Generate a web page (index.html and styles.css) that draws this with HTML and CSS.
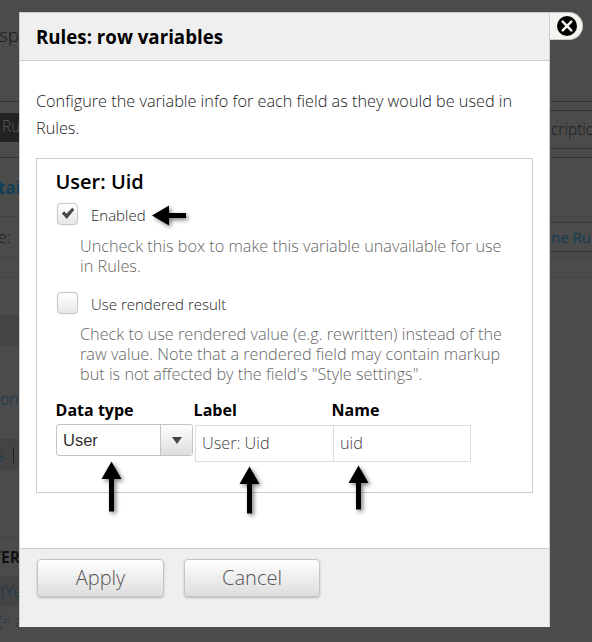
FILE: index.html
```html
<!DOCTYPE html>
<html lang="en">
<head>
<meta charset="utf-8">
<title>Rules: row variables</title>
<link rel="stylesheet" href="styles.css">
</head>
<body>
<div class="page">
  <div class="side left">
    <div class="row r1"><span class="sp">sp</span></div>
    <div class="row r2"><span class="tab">Ru</span></div>
    <div class="row r3"><b class="blue">tai</b></div>
    <div class="row r4"><span>e:</span></div>
    <div class="row r5"></div>
    <div class="row r6"></div>
    <div class="row band r7"></div>
    <div class="row r8"><span class="link">orm</span></div>
    <div class="row band r9"><span class="link">s</span><i class="bar"></i></div>
    <div class="row r10"></div>
    <div class="row r11"><b>TER</b></div>
    <div class="row band r12"><span class="link">(Yes)</span></div>
    <div class="row r13"><span class="link">(= a</span></div>
  </div>
  <div class="side right">
    <div class="row r1"></div>
    <div class="row r2"><span class="ghost">criptio</span></div>
    <div class="row r3"></div>
    <div class="row r4"><span class="ghost rules">ne Rul</span></div>
    <div class="row r5"></div>
  </div>
</div>

<div class="modal">
  <header class="head"><h1>Rules: row variables</h1></header>
  <main class="body">
    <p class="intro">Configure the variable info for each field as they would be used in<br>Rules.</p>
    <section class="fieldset">
      <h2>User: Uid</h2>
      <div class="option">
        <span class="check"><svg width="14" height="13" viewBox="0 0 14 13"><path d="M.8 6.5 3.2 4.200 5.500 6.700 11.200.8 13.400 2.800 5.800 12Z" fill="#4b4b4b"/></svg></span>
        <label>Enabled</label>
      </div>
      <p class="help first">Uncheck this box to make this variable unavailable for use<br>in Rules.</p>
      <div class="option">
        <span class="check"></span>
        <label>Use rendered result</label>
      </div>
      <p class="help second">Check to use rendered value (e.g. rewritten) instead of the<br>raw value. Note that a rendered field may contain markup<br>but is not affected by the field's "Style settings".</p>
      <div class="fields">
        <div class="field"><b>Data type</b>
          <div class="select"><span>User</span><i><svg width="10" height="7" viewBox="0 0 10 7"><path d="M0 0H10L5 7Z" fill="#444"/></svg></i></div>
        </div>
        <div class="field"><b>Label</b><div class="input">User: Uid</div></div>
        <div class="field"><b>Name</b><div class="input">uid</div></div>
      </div>
    </section>
  </main>
  <footer class="foot">
    <div class="btn apply">Apply</div>
    <div class="btn cancel">Cancel</div>
  </footer>
</div>

<div class="close"><svg width="20" height="20" viewBox="0 0 20 20"><circle cx="10" cy="10" r="10" fill="#000"/><path d="M5.7 5.7 14.3 14.3M14.3 5.7 5.7 14.3" stroke="#f3f5ee" stroke-width="2.5" stroke-linecap="round"/></svg></div>

<svg class="arrows" width="592" height="642" viewBox="0 0 592 642">
  <path d="M152 215.5 169 205.500V213H186V218H169V225.500Z"/>
  <path d="M111.500 461.500 121.500 479H114V511.500H109V479H101.500Z"/>
  <path d="M249.500 466.500 259.500 484H252V513.500H247V484H239.500Z"/>
  <path d="M358.500 465.500 368.500 483H361V509.500H356V483H348.500Z"/>
</svg>
</body>
</html>
```
FILE: styles.css
```css
* { box-sizing: border-box; }
body {
  margin: 0;
  width: 592px;
  height: 642px;
  overflow: hidden;
  background: #4b4b4b;
  font-family: "Open Sans", sans-serif;
  font-weight: 300;
  color: #222;
}
h1, h2, p { margin: 0; }
i { font-style: normal; }

.page { display: flex; justify-content: space-between; height: 642px; }
.side { display: flex; flex-direction: column; overflow: hidden; font-size: 15.5px; color: #181818; }
.left { width: 19px; }
.right { width: 42px; }
.row { flex: none; display: flex; align-items: center; white-space: nowrap; border-bottom: 1px solid #444; }
.r1 { height: 102px; border-color: #353535; }
.r2 { height: 56px; border-color: #353535; }
.r3 { height: 59px; }
.r4 { height: 41px; }
.r5 { height: 20px; }
.r6 { height: 37px; border: 0; }
.r7 { height: 31px; border: 0; }
.r8 { height: 93px; padding-top: 12px; border: 0; }
.r9 { height: 31px; border: 0; }
.r10 { height: 68px; }
.r11 { height: 38px; border: 0; }
.r12 { height: 30px; border: 0; }
.r13 { height: 34px; border: 0; }
.band { background: #444; }
.sp { font-size: 19px; margin: -32px 0 0 -1px; }
.tab { width: 19px; height: 29px; padding-left: 2px; margin-top: -5px; line-height: 27px; background: #222; color: #5c5c5c; }
.blue { margin: 1px 0 0 -2px; font-size: 17px; font-weight: 700; color: #123f55; }
.left .r4 span { margin-left: -2px; }
.link { color: #15384f; }
.left .r9 .link { margin-left: -3px; }
.bar { width: 1px; height: 16px; margin-left: 9px; background: #202020; }
.r11 b { margin-left: -8px; font-size: 15.5px; font-weight: 700; color: #111; }
.r12 .link { margin-left: 1px; }
.r13 .link { margin: -5px 0 0 -2px; }
.ghost { width: 42px; height: 39px; padding-left: 1px; line-height: 37px; border: solid #333; border-width: 1px 0; }
.ghost.rules { height: 30px; margin-top: -1px; line-height: 29px; font-size: 15px; font-weight: 400; color: #103c54; }

.modal {
  position: absolute;
  left: 19px;
  top: 12px;
  width: 531px;
  height: 615px;
  display: flex;
  flex-direction: column;
  background: #fff;
  border: 1px solid #ccc;
  border-bottom-color: #efefef;
}
.head { height: 48px; padding-left: 16px; background: #efefef; border-bottom: 1px solid #ccc; }
.head h1 { font-size: 18.7px; line-height: 48px; font-weight: 700; color: #000; white-space: nowrap; }
.body { flex: 1; padding: 27px 16px 0; }
.intro { font-size: 16.25px; line-height: 27px; white-space: nowrap; }
.fieldset { width: 497px; height: 335px; margin-top: 16px; padding: 9px 0 0 19px; border: 1px solid #ccc; }
.fieldset h2 { margin-left: -.5px; font-size: 20px; line-height: 28px; font-weight: 600; color: #000; }
.option { display: flex; align-items: center; height: 36px; margin-top: -1px; font-size: 15px; gap: 13px; }
.check {
  display: flex;
  align-items: center;
  justify-content: center;
  width: 21px;
  height: 22px;
  margin-left: 1px;
  margin-top: 1px;
  border: 1px solid #c8c8c8;
  border-radius: 4px;
  background: linear-gradient(#fff, #e6e6e6);
  box-shadow: 0 0 1px #ccc;
}
.option label { padding-top: 4px; white-space: nowrap; }
.help { margin-left: 24px; font-size: 16.25px; line-height: 20px; color: #666; white-space: nowrap; }
.help.first { padding: 5px 0 9px; }
.help.second { padding-top: 4px; }
.fields { display: flex; margin-top: 15px; }
.field { width: 138px; }
.field b { display: block; height: 26px; margin-left: -.4px; font-size: 16px; line-height: 22px; font-weight: 700; color: #000; }
.select {
  display: flex;
  width: 137px;
  height: 32px;
  margin-top: -1px;
  border: 1px solid #c4c4c4;
  border-radius: 3px;
  overflow: hidden;
  font: 16.5px/31px "Liberation Sans", sans-serif;
  color: #333;
}
.select span { flex: 1; padding-left: 6px; }
.select i { width: 32px; display: flex; align-items: center; justify-content: center; border-left: 1px solid #c4c4c4; background: linear-gradient(#fff, #ddd); }
.input { width: 139px; height: 37px; margin-left: 1px; padding-left: 6px; border: 1px solid #ddd; font-size: 16.25px; line-height: 35px; color: #444; }
.field + .field + .field .input { width: 138px; }
.foot { display: flex; gap: 20px; height: 78px; padding: 10px 17px 0; background: #efefef; border-top: 1px solid #ccc; }
.btn {
  height: 38px;
  border: 1px solid #c4c4c4;
  border-radius: 4px;
  background: linear-gradient(#fff, #ddd);
  box-shadow: 0 1px 2px rgba(0, 0, 0, .25);
  font-size: 20px;
  line-height: 36px;
  text-align: center;
  color: #555;
}
.apply { width: 127px; }
.cancel { width: 136px; }
.close {
  position: absolute;
  left: 550px;
  top: 12px;
  width: 33px;
  height: 28px;
  padding: 3px 0 0 7px;
  border: 1px solid #ccc;
  border-left: 0;
  border-radius: 0 14px 14px 0;
  background: #f3f5ee;
}
.close svg, .check svg { display: block; }
.arrows { position: absolute; left: 0; top: 0; pointer-events: none; filter: drop-shadow(2px 2px 2px rgba(0, 0, 0, .5)); }
```
